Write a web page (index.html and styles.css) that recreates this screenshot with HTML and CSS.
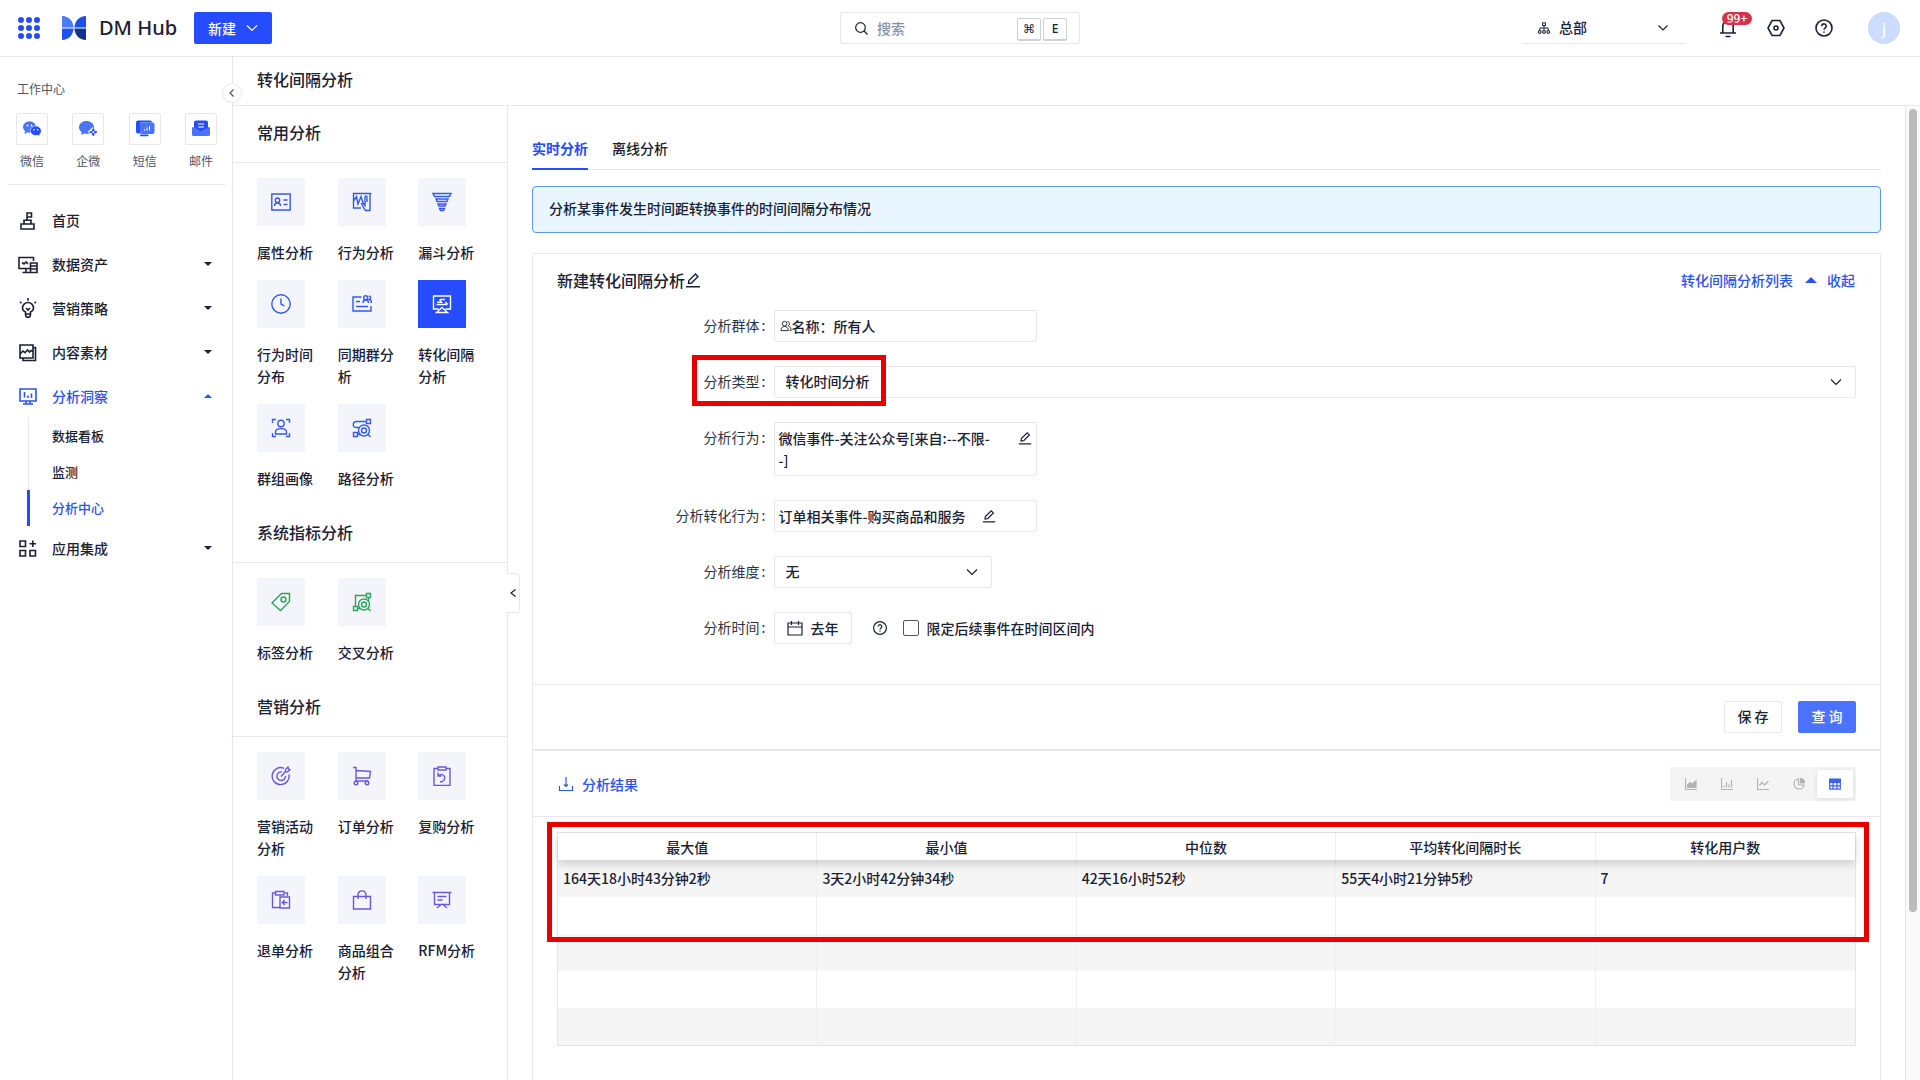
FILE: index.html
```html
<!DOCTYPE html>
<html lang="zh-CN">
<head>
<meta charset="utf-8">
<meta name="viewport" content="width=device-width, initial-scale=1">
<title>转化间隔分析 - DM Hub</title>
<link rel="stylesheet" href="styles.css">
</head>
<body>
<header class="topbar">
  <div class="topbar-left">
    <button class="icon-btn apps-btn" aria-label="应用">
      <svg width="22" height="22" viewBox="0 0 22 22" fill="#254cff"><circle cx="3" cy="3" r="3"/><circle cx="11" cy="3" r="3"/><circle cx="19" cy="3" r="3"/><circle cx="3" cy="11" r="3"/><circle cx="11" cy="11" r="3"/><circle cx="19" cy="11" r="3"/><circle cx="3" cy="19" r="3"/><circle cx="11" cy="19" r="3"/><circle cx="19" cy="19" r="3"/></svg>
    </button>
    <a class="brand" href="#">
      <svg width="24" height="24" viewBox="0 0 24 24"><path d="M0 0c7 0 11 5 11.700 11.500H0z" fill="#4a7df5"/><path d="M24 0c-7 0-11 5-11.700 11.500H24z" fill="#1d4fe0"/><path d="M0 12.500h11.700C11 19 7 24 0 24z" fill="#2050f0"/><path d="M24 12.500H12.300C13 19 17 24 24 24z" fill="#16308f"/></svg>
      <span>DM Hub</span>
    </a>
    <button class="new-btn">新建<svg width="12" height="12" viewBox="0 0 12 12" class="line"><path d="M1 3.500l5 5 5-5"/></svg></button>
  </div>
  <label class="search">
    <svg width="13" height="13" viewBox="0 0 13 13" class="line"><circle cx="5.500" cy="5.500" r="4.800"/><path d="M9 9l3.500 3.500"/></svg>
    <input type="text" placeholder="搜索" aria-label="搜索">
    <kbd>⌘</kbd><kbd>E</kbd>
  </label>
  <div class="topbar-right">
    <button class="org">
      <svg width="12" height="12" viewBox="0 0 12 12" class="line thin"><path d="M4.500.8h3v2.700h-3zM6 3.500v5M1.800 8.500V6h8.400v2.500M.6 8.700H3v2.500H.6zM4.800 8.700h2.400v2.500H4.800zM9 8.700h2.400v2.500H9z"/></svg>
      <span>总部</span>
      <svg width="12" height="12" viewBox="0 0 12 12" class="line"><path d="M1.500 3.500L6 8l4.500-4.500"/></svg>
    </button>
    <button class="icon-btn bell" aria-label="通知">
      <svg width="16" height="20" viewBox="0 0 16 20" class="line bold"><path d="M0 15h16M2.800 15V8a5 5 0 0 1 10.400 0v7M5.500 18.500h5"/></svg>
      <span class="badge">99+</span>
    </button>
    <button class="icon-btn" aria-label="设置"><svg width="18" height="18" viewBox="0 0 18 18" class="line bold"><path d="M5 1.500h8L17 9l-4 7.500H5L1 9z"/><circle cx="9" cy="9" r="2"/></svg></button>
    <button class="icon-btn" aria-label="帮助"><svg width="18" height="18" viewBox="0 0 18 18" class="line bold"><circle cx="9" cy="9" r="8"/><path d="M6.800 7.200a2.200 2.200 0 1 1 3.500 1.700c-.9.600-1.300.9-1.300 1.800M9 12.400v1.400"/></svg></button>
    <span class="avatar">j</span>
  </div>
</header>

<div class="shell">
  <nav class="sidebar">
    <button class="fold" aria-label="收起侧栏"><svg width="10" height="10" viewBox="0 0 10 10" class="line"><path d="M6.500 1.500L3 5l3.500 3.500"/></svg></button>
    <h2 class="work-title">工作中心</h2>
    <div class="work">
      <a href="#"><span><svg width="20" height="20" viewBox="0 0 20 20"><ellipse cx="7.500" cy="8" rx="6.500" ry="5.800" fill="#4a73f8"/><path d="M3 12l-.5 3 3-1.500z" fill="#4a73f8"/><circle cx="5.500" cy="6.500" r=".9" fill="#fff"/><circle cx="9.500" cy="6.500" r=".9" fill="#fff"/><ellipse cx="13.800" cy="11.800" rx="5.500" ry="4.800" fill="#254cff" stroke="#fff" stroke-width=".6"/><path d="M15 15l2.500 1.800L17.200 14z" fill="#254cff"/><circle cx="12" cy="10.800" r=".8" fill="#fff"/><circle cx="15.600" cy="10.800" r=".8" fill="#fff"/></svg></span>微信</a>
      <a href="#"><span><svg width="20" height="20" viewBox="0 0 20 20"><path d="M8.500 2C4.500 2 1 4.700 1 8.300c0 2 1 3.700 2.600 4.800L3.200 16l3-1.500c2 .5 4 .4 5.300 0l-1.700-1.700 4.700-4.500 1.600 1c.3-5-4-7.300-7.600-7.300z" fill="#4a73f8"/><path d="M15.300 9.500l1 1.700-1 1-1-1zM15.300 14l1 1-1 1.700-1-1.700zM11.700 13.100l1.700-1 1 1-1 1zM18.900 13.100l-1.700 1-1-1 1-1z" fill="#254cff" stroke="#254cff"/></svg></span>企微</a>
      <a href="#"><span><svg width="20" height="20" viewBox="0 0 20 20"><path d="M3 1.500h12a2 2 0 0 1 2 2H5.500v11H3a2 2 0 0 1-2-2v-9a2 2 0 0 1 2-2z" fill="#254cff"/><rect x="5" y="3.500" width="14.500" height="11.500" rx="2" fill="#4a73f8"/><rect x="5" y="15.500" width="8.500" height="1.800" rx=".9" fill="#254cff"/><path d="M9.500 11.500V10M12 11.500V8.500M14.500 11.500V7" stroke="#fff" stroke-width="1"/></svg></span>短信</a>
      <a href="#"><span><svg width="20" height="20" viewBox="0 0 20 20"><path d="M5 1.500h10a2 2 0 0 1 2 2v6l-7 3.500-7-3.500v-6a2 2 0 0 1 2-2z" fill="#254cff"/><path d="M7 5h6M7 8h6" stroke="#fff" stroke-width="1"/><path d="M1 8.200h2l7 4.300 7-4.300h2v7.300a1.500 1.500 0 0 1-1.500 1.500h-15A1.500 1.500 0 0 1 1 15.500z" fill="#4a73f8"/></svg></span>邮件</a>
    </div>
    <ul class="menu">
      <li><a href="#"><svg width="20" height="20" viewBox="0 0 20 20" class="line bold"><path d="M9 10V3h4.500v4H9M6 14v-3.700h7V14M3 14h13v5H3z"/></svg>首页</a></li>
      <li><a href="#" class="has-sub"><svg width="20" height="20" viewBox="0 0 20 20" class="line bold"><path d="M12 14.500H1v-11h14.500V7M4.500 18.500H12M8 14.500v4M4 8.500l2 1.500 2-2 2 2M12.500 9h6.500v9.500h-6.500zM12.500 12H19M12.500 15H19"/></svg>数据资产</a></li>
      <li><a href="#" class="has-sub"><svg width="20" height="20" viewBox="0 0 20 20" class="line bold"><path d="M7.500 16v-2C5.300 13 4.500 11.500 4.500 10a5.500 5.500 0 0 1 11 0c0 1.500-.8 3-3 4v2zM7.500 16c0 4.500 5 4.500 5 0M8 10l2 2 2-2M10 2.700V0M3.500 5L2 4M16.500 5L18 4"/></svg>营销策略</a></li>
      <li><a href="#" class="has-sub"><svg width="20" height="20" viewBox="0 0 20 20" class="line bold"><path d="M2 3h13v13H2zM15 5.500h2.500v13H5V16M2 12l3-3 2 1.700L9.500 8l2 2L13 8.500l2 1"/></svg>内容素材</a></li>
      <li><a href="#" class="has-sub open"><svg width="20" height="20" viewBox="0 0 20 20" class="line bold"><path d="M2 3h16v12H2zM5 18h10M8 15v3M12 15v3M6.500 6v5.500M10 9.500V12M13.500 7.500V12"/></svg>分析洞察</a>
        <ul class="submenu">
          <li><a href="#">数据看板</a></li>
          <li><a href="#">监测</a></li>
          <li><a href="#" class="current">分析中心</a></li>
        </ul>
      </li>
      <li><a href="#" class="has-sub"><svg width="20" height="20" viewBox="0 0 20 20" class="line bold"><path d="M2 3h5.500v5.500H2zM2 12.500h5.500V18H2zM12 12.500h5.500V18H12zM14.800 2.500v6.500M11.500 5.800H18"/></svg>应用集成</a></li>
    </ul>
  </nav>

  <div class="page">
    <h1 class="page-title">转化间隔分析</h1>
    <div class="page-body">
      <aside class="catalog">
        <button class="drawer" aria-label="收起面板"><svg width="8" height="10" viewBox="0 0 8 10" class="line"><path d="M6.500 1.500L2 5l4.500 3.500"/></svg></button>
        <h2>常用分析</h2>
        <div class="tiles blue">
          <a href="#"><span><svg width="20" height="20" viewBox="0 0 20 20" class="line"><path d="M.8 2h18.400v16H.8zM3.500 14c0-4 6-4 6 0M12.500 8h4M12.500 12.500h4"/><circle cx="6.500" cy="8.200" r="2.200"/></svg></span>属性分析</a>
          <a href="#"><span><svg width="20" height="20" viewBox="0 0 20 20" class="line"><path d="M9 16H1.500V1.500h17V3M1.500 9l3-4.500L6 12l3-7.500L11 11M18.500 18.500h-5L9.500 12l1.500-1 2 2.500V5a1 1 0 0 1 2 0v5M18 3v15.500"/></svg></span>行为分析</a>
          <a href="#"><span><svg width="20" height="20" viewBox="0 0 20 20" class="line"><path d="M1 1.500h18l-1.500 3h-15zM4 7h12l-1 2.500H5zM6 12h8l-1 2H7zM7.500 16.500h5l-1 2h-3z"/></svg></span>漏斗分析</a>
          <a href="#"><span><svg width="20" height="20" viewBox="0 0 20 20" class="line"><circle cx="10" cy="10" r="9.200"/><path d="M10 4.500V10l3.500 2"/></svg></span>行为时间分布</a>
          <a href="#"><span><svg width="20" height="20" viewBox="0 0 20 20" class="line"><path d="M9.500 3H1v14h18v-5M4 7.500h4M4 12.500h12M11 9c0-4 5.500-4 5.500 0M17 2c2 .5 2 3 .5 3.500 1.500.5 2 1.500 2 3.500"/><circle cx="13.700" cy="3.800" r="2"/></svg></span>同期群分析</a>
          <a href="#" class="active" aria-current="page"><span><svg width="20" height="20" viewBox="0 0 20 20" class="line"><path d="M6.500 15H1.500V2h17v13h-5M10 13.500L4.500 18.500h11zM5 8.200h4.500L7.500 5.500M8 5.500h5M15.500 10.500h-11M13.500 8l2 2.500"/></svg></span>转化间隔分析</a>
          <a href="#"><span><svg width="20" height="20" viewBox="0 0 20 20" class="line"><path d="M1.500 5V1.500H5M15 1.500h3.500V5M1.500 15v3.500H5M15 18.500h3.500V15M4.500 16v-2c0-4.500 11-4.500 11 0v2z"/><circle cx="10" cy="5.500" r="3.200"/></svg></span>群组画像</a>
          <a href="#"><span><svg width="20" height="20" viewBox="0 0 20 20" class="line"><path d="M14.500 1.500h4v4h-4zM1.500 14.500h4v4h-4zM14.500 3.500H5c-5 0-5 6 0 6h2M15.500 16l3 3M5.500 16.500H9"/><circle cx="12" cy="12.500" r="5.500"/><circle cx="12" cy="12.500" r="2.500"/></svg></span>路径分析</a>
        </div>
        <h2>系统指标分析</h2>
        <div class="tiles green">
          <a href="#"><span><svg width="20" height="20" viewBox="0 0 20 20" class="line"><path d="M10.500 1.500h8v8l-9 9L1 11z"/><circle cx="12.500" cy="7.500" r="2.500"/></svg></span>标签分析</a>
          <a href="#"><span><svg width="20" height="20" viewBox="0 0 20 20" class="line"><path d="M14.500 1.500h4v4h-4zM1.500 14.500h4v4h-4zM14.500 3.500H3.500v11M16.500 5.500v4M15.500 16l3 3M5.500 16.500H9"/><circle cx="12" cy="12.500" r="5.500"/><circle cx="12" cy="12.500" r="2.500"/></svg></span>交叉分析</a>
        </div>
        <h2>营销分析</h2>
        <div class="tiles purple">
          <a href="#"><span><svg width="20" height="20" viewBox="0 0 20 20" class="line"><path d="M13 2.300A8.500 8.500 0 1 0 18 8.500M11 6a4.300 4.300 0 1 0 3.500 4M10 10.500L14.500 5.500M14.500 5.500V3.500L17 1l.5 2 1.500.7-2.300 2z"/></svg></span>营销活动分析</a>
          <a href="#"><span><svg width="20" height="20" viewBox="0 0 20 20" class="line"><path d="M1 1.500h3V15h12.500M4 4.500l14.500 1-1 6.500H4"/><circle cx="4" cy="17" r="1.800"/><circle cx="15" cy="17" r="1.800"/></svg></span>订单分析</a>
          <a href="#"><span><svg width="20" height="20" viewBox="0 0 20 20" class="line"><path d="M6 2.500H2v17h16v-17h-4M6 1h8v3H6zM6 6.500v3.500h3.500M6.500 9.800c5-4 9 2.700 3.500 6H8"/></svg></span>复购分析</a>
          <a href="#"><span><svg width="20" height="20" viewBox="0 0 20 20" class="line"><path d="M4.500 3H1.500v14.500H9M14 3h2.500v3M4.500 1.500H13V5H4.500zM9 7h9.500v11H9zM16.500 12.500H11.500M13.700 10l-2.400 2.500 2.400 2.500"/></svg></span>退单分析</a>
          <a href="#"><span><svg width="20" height="20" viewBox="0 0 20 20" class="line"><path d="M1.500 6.500h17v12.500h-17zM6 9V5c0-5.500 8-5.500 8 0v4"/></svg></span>商品组合分析</a>
          <a href="#"><span><svg width="20" height="20" viewBox="0 0 20 20" class="line"><path d="M.5 2.500h19M2.500 2.500v12h15v-12M5.500 6.500h9M5.500 10h5M9 14.500l-4 3.500M11 14.500l4 3.500"/></svg></span>RFM分析</a>
        </div>
      </aside>

      <main class="content">
        <div class="tabs" role="tablist">
          <button role="tab" aria-selected="true">实时分析</button>
          <button role="tab" aria-selected="false">离线分析</button>
        </div>
        <p class="notice">分析某事件发生时间距转换事件的时间间隔分布情况</p>

        <section class="card">
          <div class="card-head">
            <h2>新建转化间隔分析<svg width="16" height="16" viewBox="0 0 16 16" class="line pen"><path d="M1 14.700h14M3.500 11.500l.3-3L10.500 2l2.500 2.500L6.500 11z"/></svg></h2>
            <a href="#">转化间隔分析列表</a>
            <button class="collapse"><i class="tri"></i>收起</button>
          </div>
          <form class="form" onsubmit="return false">
            <div class="row">
              <span class="label">分析群体</span>
              <div class="control"><div class="box medium"><svg width="12" height="12" viewBox="0 0 13 12" class="line thin"><circle cx="5" cy="3.500" r="2.500"/><path d="M1 11c0-6 8-6 8 0zM8 1c3 .3 3 4 .8 4.700C11 6.500 12 8.500 12 11h-1.500"/></svg>名称：所有人</div></div>
            </div>
            <div class="row">
              <label class="label" for="type">分析类型</label>
              <div class="control marked">
                <div class="select wide"><select id="type"><option>转化时间分析</option></select><svg width="12" height="12" viewBox="0 0 12 12" class="line"><path d="M1 3.500l5 5 5-5"/></svg></div>
                <i class="mark mark-type"></i>
              </div>
            </div>
            <div class="row">
              <span class="label">分析行为</span>
              <div class="control"><div class="box medium"><span class="value">微信事件-关注公众号[来自:--不限-<wbr>-]</span><button class="icon-btn" aria-label="编辑分析行为"><svg width="14" height="14" viewBox="0 0 16 16" class="line pen"><path d="M1 14.700h14M3.500 11.500l.3-3L10.500 2l2.500 2.500L6.500 11z"/></svg></button></div></div>
            </div>
            <div class="row">
              <span class="label">分析转化行为</span>
              <div class="control"><div class="box medium"><span>订单相关事件-购买商品和服务</span><button class="icon-btn" aria-label="编辑转化行为"><svg width="14" height="14" viewBox="0 0 16 16" class="line pen"><path d="M1 14.700h14M3.500 11.500l.3-3L10.500 2l2.500 2.500L6.500 11z"/></svg></button></div></div>
            </div>
            <div class="row">
              <label class="label" for="dim">分析维度</label>
              <div class="control"><div class="select narrow"><select id="dim"><option>无</option></select><svg width="12" height="12" viewBox="0 0 12 12" class="line"><path d="M1 3.500l5 5 5-5"/></svg></div></div>
            </div>
            <div class="row">
              <span class="label">分析时间</span>
              <div class="control">
                <button class="date"><svg width="16" height="16" viewBox="0 0 16 16" class="line"><path d="M1 3h14v12H1zM1 7h14M4.500 1v4M11.500 1v4"/></svg>去年</button>
                <svg width="14" height="14" viewBox="0 0 14 14" class="line hint"><circle cx="7" cy="7" r="6.400"/><path d="M5.200 5.500a1.800 1.800 0 1 1 2.800 1.500c-.7.500-1 .7-1 1.400M7 9.600v1.200"/></svg>
                <label class="check"><input type="checkbox">限定后续事件在时间区间内</label>
              </div>
            </div>
          </form>
          <div class="actions">
            <button class="btn">保 存</button>
            <button class="btn primary">查 询</button>
          </div>
          <div class="result-head">
            <a href="#"><svg width="16" height="16" viewBox="0 0 16 16" class="line"><path d="M1.500 10v4.500h13V10M8 1v9.500M6 8.500l2 2 2-2"/></svg>分析结果</a>
            <div class="views">
              <button aria-label="面积图"><svg width="12" height="12" viewBox="0 0 12 12" class="line"><path d="M.5 0v11.500H12"/><path d="M2.500 9.500V7l2.500-2.500 2 1.500L11 3v6.500z" fill="currentColor"/></svg></button>
              <button aria-label="柱状图"><svg width="12" height="12" viewBox="0 0 12 12" class="line"><path d="M.5 0v11.500H12M3 9.500v-2M5.500 9.500V4.500M8 9.500v-3M10.500 9.500V2"/></svg></button>
              <button aria-label="折线图"><svg width="12" height="12" viewBox="0 0 12 12" class="line"><path d="M.5 0v11.500H12M2.500 7.500L5 4.500 7.500 7l4-4"/></svg></button>
              <button aria-label="饼图"><svg width="12" height="12" viewBox="0 0 12 12" class="line"><path d="M5.500 1a5 5 0 1 0 5.500 6H5.500z"/><path d="M7.500.5a4.500 4.500 0 0 1 4 4.500h-4z" fill="currentColor"/></svg></button>
              <button aria-label="表格" class="on"><svg width="12" height="12" viewBox="0 0 12 12" class="line"><path d="M.7 1.200h10.600v10H.7zM.7 4.500h10.600M.7 7.800h10.600M4 3.500v7.500M8 3.500v7.500"/><path d="M.7 1.500h10.600v2H.7z" fill="currentColor"/></svg></button>
            </div>
          </div>
          <div class="result marked">
            <table>
              <thead><tr><th>最大值</th><th>最小值</th><th>中位数</th><th>平均转化间隔时长</th><th>转化用户数</th></tr></thead>
              <tbody>
                <tr><td>164天18小时43分钟2秒</td><td>3天2小时42分钟34秒</td><td>42天16小时52秒</td><td>55天4小时21分钟5秒</td><td>7</td></tr>
                <tr><td></td><td></td><td></td><td></td><td></td></tr>
                <tr><td></td><td></td><td></td><td></td><td></td></tr>
                <tr><td></td><td></td><td></td><td></td><td></td></tr>
                <tr><td></td><td></td><td></td><td></td><td></td></tr>
              </tbody>
            </table>
            <i class="mark mark-result"></i>
          </div>
        </section>
      </main>
      <div class="scroll"><i></i></div>
    </div>
  </div>
</div>
</body>
</html>
```
FILE: styles.css
```css
:root {
  --ink: #1a2133;
  --soft: #4d5566;
  --blue: #254cff;
  --link: #2c53ee;
  --line: #e6e7f0;
  --mark: #e80000;
}

* { box-sizing: border-box; }

body {
  margin: 0;
  height: 100vh;
  display: flex;
  flex-direction: column;
  overflow: hidden;
  background: #fff;
  color: var(--ink);
  font: 500 14px/22px "Noto Sans CJK SC", "Noto Sans", sans-serif;
}

h1, h2, p, ul { margin: 0; padding: 0; }
h1, h2 { font-size: 16px; font-weight: 500; }
ul { list-style: none; }
a { color: inherit; text-decoration: none; }
button, input, select { font: inherit; color: inherit; }
button { padding: 0; border: 0; background: none; cursor: pointer; }
svg { flex: none; display: block; }

.line { fill: none; stroke: currentColor; stroke-width: 1.2; }
.line.thin { stroke-width: 1; }
.line.bold { stroke-width: 1.6; }
.line.pen { stroke-width: 1.4; }
.icon-btn { display: flex; align-items: center; justify-content: center; }

/* top bar */
.topbar {
  flex: none;
  display: grid;
  grid-template-columns: 1fr 240px 1fr;
  align-items: center;
  height: 57px;
  padding: 0 20px;
  border-bottom: 1px solid var(--line);
}
.topbar-left, .topbar-right { display: flex; align-items: center; }
.topbar-left { margin-left: -2px; }
.topbar-right { justify-content: flex-end; }
.apps-btn { margin-right: 22px; }
.brand {
  display: flex;
  align-items: center;
  gap: 13px;
  margin-right: 17px;
  font: 500 20px/28px "Noto Sans", sans-serif;
}
.brand span { padding-bottom: 1px; }
.new-btn {
  display: flex;
  align-items: center;
  justify-content: center;
  gap: 10px;
  width: 78px;
  height: 32px;
  padding-bottom: 1px;
  border-radius: 2px;
  background: var(--blue);
  color: #fff;
}
.search {
  display: flex;
  align-items: center;
  height: 32px;
  padding: 0 12px 0 14px;
  border: 1px solid var(--line);
  border-radius: 2px;
}
.search input {
  flex: 1;
  min-width: 0;
  margin-left: 9px;
  padding: 0 0 1px;
  border: 0;
  outline: 0;
}
.search input::placeholder { color: #8a90a6; opacity: 1; }
.search kbd {
  width: 24px;
  height: 23px;
  margin: 2px 0 0 2px;
  border: 1px solid #ccd0de;
  border-bottom-width: 2px;
  border-radius: 2px;
  font: 500 12px/19px "Noto Sans", "DejaVu Sans", sans-serif;
  text-align: center;
}
.org {
  display: flex;
  align-items: center;
  gap: 9px;
  width: 160px;
  height: 32px;
  margin-right: 36px;
  padding: 0 15px 0 14px;
  border-bottom: 1px solid var(--line);
}
.org span { flex: 1; padding-bottom: 1px; text-align: left; }
.topbar-right .icon-btn { margin-right: 30px; }
.topbar-right .bell { position: relative; margin-right: 31px; }
.topbar-right .icon-btn:last-of-type { margin-right: 35px; }
.badge {
  position: absolute;
  left: 2px;
  top: -6px;
  width: 30px;
  height: 13px;
  border-radius: 7px;
  background: #d9304a;
  color: #fff;
  font-size: 12px;
  line-height: 12px;
}
.avatar {
  width: 32px;
  height: 32px;
  border-radius: 50%;
  background: #cbdcff;
  color: #fff;
  line-height: 32px;
  text-align: center;
}

/* sidebar */
.shell { flex: 1; min-height: 0; display: flex; }
.sidebar {
  position: relative;
  flex: none;
  width: 233px;
  padding-top: 22px;
  border-right: 1px solid var(--line);
}
.fold {
  position: absolute;
  z-index: 2;
  right: -10px;
  top: 26px;
  display: flex;
  align-items: center;
  justify-content: center;
  width: 20px;
  height: 20px;
  border: 1px solid var(--line);
  border-radius: 50%;
  background: #fff;
  color: var(--soft);
}
.work-title {
  padding-left: 17px;
  color: var(--soft);
  font-size: 12px;
  font-weight: 400;
  line-height: 20px;
}
.work {
  display: flex;
  justify-content: space-between;
  margin: 0 7px 13px 8px;
  padding: 14px 8px 14px;
  border-bottom: 1px solid var(--line);
  color: var(--soft);
  font-size: 12px;
  font-weight: 400;
  line-height: 18px;
  text-align: center;
}
.work span {
  display: flex;
  align-items: center;
  justify-content: center;
  width: 32px;
  height: 32px;
  margin-bottom: 7px;
  border: 1px solid var(--line);
  border-radius: 2px;
}
.menu > li > a {
  display: flex;
  align-items: center;
  gap: 14px;
  height: 44px;
  padding: 0 20px 0 18px;
}
.has-sub::after {
  content: "";
  margin-left: auto;
  border: 4px solid transparent;
  border-top-color: currentColor;
  border-bottom: 0;
}
.has-sub.open { color: var(--link); }
.has-sub.open::after {
  border-top: 0;
  border-bottom: 4px solid currentColor;
}
.submenu li { padding-left: 27px; }
.submenu a {
  display: block;
  height: 36px;
  padding-left: 23px;
  border-left: 1px solid var(--line);
  margin-left: 1px;
  font-size: 13px;
  line-height: 35px;
}
.submenu .current {
  margin-left: 0;
  padding-left: 22px;
  border-left: 3px solid var(--blue);
  color: var(--link);
}

/* page */
.page { flex: 1; min-width: 0; display: flex; flex-direction: column; }
.page-title {
  flex: none;
  height: 49px;
  padding-left: 24px;
  border-bottom: 1px solid var(--line);
  line-height: 44px;
}
.page-body { flex: 1; min-height: 0; display: flex; }

/* analysis catalog */
.catalog {
  position: relative;
  flex: none;
  width: 275px;
  border-right: 1px solid var(--line);
}
.catalog h2 {
  height: 57px;
  padding-left: 24px;
  border-bottom: 1px solid var(--line);
  line-height: 52px;
}
.drawer {
  position: absolute;
  z-index: 2;
  right: -13px;
  top: 467px;
  display: flex;
  align-items: center;
  justify-content: center;
  width: 13px;
  height: 40px;
  border: 1px solid var(--line);
  border-left: 0;
  border-radius: 0 4px 4px 0;
  background: #fff;
}
.tiles {
  display: grid;
  grid-template-columns: repeat(3, 1fr);
  row-gap: 17px;
  padding: 15px 8px 17px 24px;
}
.tiles a { padding-right: 16px; }
.tiles span {
  display: flex;
  align-items: center;
  justify-content: center;
  width: 48px;
  height: 48px;
  margin-bottom: 15px;
  background: #f4f5fa;
}
.tiles .line { stroke-width: 1.4; }
.blue span { color: #3558ea; }
.green span { color: #2ba35f; }
.purple span { color: #6b57dc; }
.tiles .active span { background: var(--blue); color: #fff; }

/* content */
.content {
  flex: 1;
  min-width: 0;
  display: flex;
  flex-direction: column;
  padding: 26px 24px 0;
}
.tabs {
  flex: none;
  display: flex;
  gap: 24px;
  height: 38px;
  margin-bottom: 16px;
  border-bottom: 1px solid var(--line);
}
.tabs button {
  height: 38px;
  padding-bottom: 4px;
  border-bottom: 2px solid transparent;
}
.tabs [aria-selected="true"] {
  border-color: var(--blue);
  color: var(--blue);
  font-weight: 700;
}
.notice {
  flex: none;
  margin-bottom: 20px;
  padding: 10px 16px 13px;
  border: 1px solid #5f97ea;
  border-radius: 4px;
  background: #e9f6ff;
}
.card {
  flex: 1;
  min-height: 0;
  border: 1px solid var(--line);
  border-bottom: 0;
  border-radius: 2px 2px 0 0;
}
.card-head {
  display: flex;
  align-items: center;
  gap: 12px;
  padding: 14px 25px 18px 24px;
  color: var(--link);
  line-height: 24px;
}
.card-head h2 {
  flex: 1;
  display: flex;
  align-items: center;
  color: var(--ink);
}
.collapse { display: flex; align-items: center; gap: 10px; }
.tri {
  border: 6px solid transparent;
  border-top: 0;
  border-bottom: 6px solid currentColor;
}
.form {
  display: grid;
  gap: 24px;
  padding: 0 24px 40px;
  border-bottom: 1px solid var(--line);
}
.row {
  display: grid;
  grid-template-columns: minmax(0, 1fr) minmax(0, 5fr);
}
.label {
  padding-right: 8px;
  color: #2b3346;
  font-weight: 400;
  line-height: 30px;
  text-align: right;
}
.label::after { content: ":"; margin-left: 2px; }
.control { display: flex; align-items: center; }
.box {
  display: flex;
  align-items: flex-start;
  min-height: 32px;
  padding: 4px;
  border: 1px solid var(--line);
  border-radius: 2px;
}
.box > svg { margin: 5px 0 0 1px; }
.box .icon-btn { height: 22px; margin-left: 16px; }
.box .value { flex: 1; padding-right: 8px; }
.medium { width: 263px; }
.select { display: grid; align-items: center; }
.select > * { grid-area: 1 / 1; }
.select svg { justify-self: end; margin-right: 14px; pointer-events: none; }
.select select {
  width: 100%;
  height: 32px;
  padding: 0 32px 2px 11px;
  border: 1px solid var(--line);
  border-radius: 2px;
  background: #fff;
  appearance: none;
}
.wide { width: 100%; }
.narrow { width: 218px; }
.date {
  display: flex;
  align-items: center;
  justify-content: center;
  gap: 8px;
  width: 78px;
  height: 32px;
  border: 1px solid var(--line);
  border-radius: 2px;
}
.hint { margin: 0 16px 0 21px; }
.check { display: flex; align-items: center; gap: 8px; }
.check input {
  width: 16px;
  height: 16px;
  margin: 0;
  border: 1px solid #4d5566;
  border-radius: 2px;
  appearance: none;
}
.check input:checked { background: var(--blue); }
.actions {
  display: flex;
  justify-content: flex-end;
  gap: 16px;
  padding: 16px 24px;
  border-bottom: 2px solid var(--line);
}
.btn {
  width: 58px;
  height: 32px;
  padding-bottom: 2px;
  border: 1px solid var(--line);
  border-radius: 2px;
}
.btn.primary {
  border-color: #4b73ff;
  background: #4b73ff;
  color: #fff;
}

/* result */
.result-head {
  display: flex;
  align-items: center;
  justify-content: space-between;
  padding: 16px 24px 15px 25px;
  border-bottom: 1px solid var(--line);
}
.result-head a {
  display: flex;
  align-items: center;
  gap: 8px;
  color: var(--link);
}
.views {
  display: flex;
  padding: 3px;
  background: #f4f4f4;
}
.views button {
  display: flex;
  align-items: center;
  justify-content: center;
  width: 36px;
  height: 28px;
  border-radius: 2px;
  color: #b3b3b3;
}
.views .on {
  background: #fff;
  box-shadow: 0 1px 4px rgba(0, 0, 0, .12);
  color: #3a60f5;
}
.result { padding: 15px 24px; }
table {
  width: 100%;
  border: 1px solid #e4e4e6;
  border-spacing: 0;
  table-layout: fixed;
}
thead {
  position: relative;
  background: #fff;
  box-shadow: 0 4px 8px rgba(0, 0, 0, .16);
}
th {
  height: 27px;
  padding: 0;
  font-weight: 500;
  line-height: 24px;
}
td {
  height: 37px;
  padding: 0 5px 2px;
}
th:not(:last-child), td:not(:last-child) { border-right: 1px solid #efeff1; }
tbody tr:nth-child(odd) { background: #f5f5f5; }

/* highlight frames */
.marked { position: relative; }
.mark {
  position: absolute;
  z-index: 3;
  border: 5px solid var(--mark);
  pointer-events: none;
}
.mark-type { left: -82px; top: -11px; width: 194px; height: 51px; }
.mark-result { left: 14px; right: 11px; top: 5px; height: 120px; }

/* scroll bar */
.scroll {
  flex: none;
  width: 15px;
  padding: 3px;
  border-left: 1px solid #e6e6e6;
  background: #fafafa;
}
.scroll i {
  display: block;
  width: 8px;
  height: 83%;
  border-radius: 4px;
  background: #bcbcbc;
}
```
